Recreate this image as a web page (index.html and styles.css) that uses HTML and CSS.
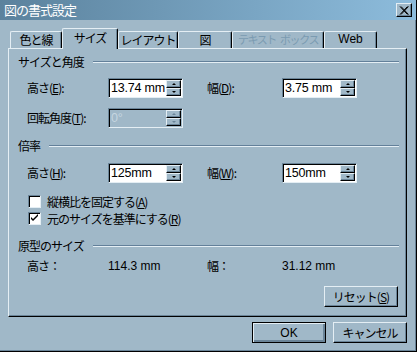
FILE: index.html
```html
<!DOCTYPE html>
<html lang="ja">

<head>
    <meta charset="UTF-8">
    <title>図の書式設定</title>
    <link rel="stylesheet" href="styles.css">
</head>

<body>
    <div class="dialog">
        <div class="titlebar">
            <span class="title">図の書式設定</span>
            <div class="close">
                <svg width="10" height="9" viewBox="0 0 10 9">
                    <path d="M1 0.5 L8.5 8.5 M2 0.5 L9.5 8.5 M8.5 0.5 L1 8.5 M9.5 0.5 L2 8.5" stroke="#000" stroke-width="1" fill="none"/>
                </svg>
            </div>
        </div>

        <div class="body">
            <ul class="tabs">
                <li class="tab w1">色と線</li>
                <li class="tab w2 active">サイズ</li>
                <li class="tab w3">レイアウト</li>
                <li class="tab w4">図</li>
                <li class="tab w5 disabled">テキスト ボックス</li>
                <li class="tab w6">Web</li>
            </ul>

            <div class="panel">
                <!-- サイズと角度 -->
                <div class="group-head g1">
                    <span>サイズと角度</span>
                    <i class="rule"></i>
                </div>
                <div class="row r1">
                    <label class="lbl">高さ(<u>E</u>):</label>
                    <div class="spin">
                        <span class="val">13.74 mm</span>
                        <span class="arrows"><b class="up"></b><b class="down"></b></span>
                    </div>
                    <label class="lbl lbl2">幅(<u>D</u>):</label>
                    <div class="spin">
                        <span class="val">3.75 mm</span>
                        <span class="arrows"><b class="up"></b><b class="down"></b></span>
                    </div>
                </div>
                <div class="row r2">
                    <label class="lbl">回転角度(<u>T</u>):</label>
                    <div class="spin off">
                        <span class="val">0°</span>
                        <span class="arrows"><b class="up"></b><b class="down"></b></span>
                    </div>
                </div>

                <!-- 倍率 -->
                <div class="group-head g2">
                    <span>倍率</span>
                    <i class="rule"></i>
                </div>
                <div class="row r3">
                    <label class="lbl">高さ(<u>H</u>):</label>
                    <div class="spin">
                        <span class="val">125mm</span>
                        <span class="arrows"><b class="up"></b><b class="down"></b></span>
                    </div>
                    <label class="lbl lbl2">幅(<u>W</u>):</label>
                    <div class="spin">
                        <span class="val">150mm</span>
                        <span class="arrows"><b class="up"></b><b class="down"></b></span>
                    </div>
                </div>
                <div class="check c1">
                    <span class="box"></span>
                    <span>縦横比を固定する(<u>A</u>)</span>
                </div>
                <div class="check">
                    <span class="box">
                        <svg width="9" height="9" viewBox="0 0 9 9">
                            <path d="M1 3 V5 L3 7 L8 2 V0 L3 5 Z" fill="#000"/>
                        </svg>
                    </span>
                    <span>元のサイズを基準にする(<u>R</u>)</span>
                </div>

                <!-- 原型のサイズ -->
                <div class="group-head g3">
                    <span>原型のサイズ</span>
                    <i class="rule"></i>
                </div>
                <div class="row info">
                    <span class="lbl">高さ：</span>
                    <span class="num">114.3 mm</span>
                    <span class="lbl lbl2">幅：</span>
                    <span class="num">31.12 mm</span>
                </div>

                <div class="reset-row">
                    <div class="btn reset">リセット(<u>S</u>)</div>
                </div>
            </div>

            <div class="footer">
                <div class="btn default">OK</div>
                <div class="btn">キャンセル</div>
            </div>
        </div>
    </div>
</body>

</html>
```

FILE: styles.css
```css
* {
    margin: 0;
    padding: 0;
    box-sizing: border-box;
}

body {
    background-color: #a0b8c8;
    font-family: "Noto Sans CJK JP", sans-serif;
    font-size: 12px;
    color: #000;
}

ul,
li {
    list-style: none;
}

u {
    text-decoration: underline;
    text-underline-offset: 1px;
}

.dialog {
    width: 417px;
    height: 352px;
    display: flex;
    flex-direction: column;
    background-color: #a0b8c8;
    border-right: 1px solid #000;
    border-bottom: 1px solid #000;
    box-shadow: inset -1px -1px 0 #6a8498;
}

/* タイトルバー */
.titlebar {
    height: 20px;
    display: flex;
    align-items: center;
    justify-content: space-between;
    padding: 0 4px 0 4px;
    background: linear-gradient(to right, #5b829d, #8dbcdc);
}

.title {
    color: #fff;
    font-size: 13px;
    line-height: 20px;
    letter-spacing: -1px;
}

.close {
    width: 16px;
    height: 14px;
    display: flex;
    align-items: center;
    justify-content: center;
    background-color: #a0b8c8;
    border-top: 1px solid #e4eef4;
    border-left: 1px solid #e4eef4;
    border-right: 1px solid #000;
    border-bottom: 1px solid #000;
    box-shadow: inset -1px -1px 0 #6a8498;
}

.body {
    flex: 1;
    padding: 8px 9px 0 8px;
}

/* タブ */
.tabs {
    height: 20px;
    display: flex;
    align-items: flex-end;
    padding-left: 2px;
}

.tab {
    height: 17px;
    line-height: 15px;
    text-align: center;
    white-space: nowrap;
    letter-spacing: -1px;
    background-color: #a0b8c8;
    border-top: 1px solid #e4eef4;
    border-left: 1px solid #e4eef4;
    border-right: 1px solid #000;
    border-radius: 2px 2px 0 0;
    box-shadow: inset -1px 0 0 #6a8498;
}

.tab.active {
    height: 21px;
    line-height: 17px;
    margin-bottom: -1px;
    position: relative;
    z-index: 1;
}

.tab.disabled {
    color: #7b9bb1;
}

.w1 { width: 52px; }
.w2 { width: 56px; }
.w3 { width: 60px; }
.w4 { width: 54px; }
.w5 { width: 92px; font-size: 11px; letter-spacing: -1.4px; word-spacing: 3px; }
.w6 { width: 53px; letter-spacing: 0; font-family: "Liberation Sans", sans-serif; }

/* パネル */
.panel {
    height: 269px;
    padding: 6px 7px 0 9px;
    border-top: 1px solid #e4eef4;
    border-left: 1px solid #e4eef4;
    border-right: 1px solid #000;
    border-bottom: 1px solid #000;
    box-shadow: inset -1px -1px 0 #6a8498;
}

.group-head {
    height: 14px;
    display: flex;
    align-items: center;
    gap: 9px;
    line-height: 14px;
    letter-spacing: -1px;
}

.rule {
    flex: 1;
    height: 2px;
    border-top: 1px solid #63809a;
    border-bottom: 1px solid #e4eef4;
}

.g2 { margin-top: 11px; }
.g3 { margin-top: 12px; }

.row {
    display: flex;
    align-items: center;
    padding-left: 9px;
}

.r1 { margin-top: 9px; }
.r2 { margin-top: 10px; }
.r3 { margin-top: 10px; }

.lbl {
    width: 81px;
    letter-spacing: -1px;
    line-height: 14px;
}

.lbl2 {
    width: 75px;
    margin-left: 24px;
}

/* スピンボックス */
.spin {
    width: 75px;
    height: 20px;
    display: flex;
    background-color: #fff;
    border-top: 1px solid #6a8498;
    border-left: 1px solid #6a8498;
    border-right: 1px solid #e4eef4;
    border-bottom: 1px solid #e4eef4;
    box-shadow: inset 1px 1px 0 #000;
}

.val {
    flex: 1;
    overflow: hidden;
    white-space: nowrap;
    padding: 1px 0 0 2px;
    font-family: "Liberation Sans", sans-serif;
    font-size: 12.5px;
    letter-spacing: -0.2px;
    line-height: 17px;
}

.arrows {
    width: 15px;
    flex: none;
    display: flex;
    flex-direction: column;
    margin: 1px 1px 1px 0;
}

.arrows b {
    flex: 1;
    display: flex;
    align-items: center;
    justify-content: center;
    background-color: #a0b8c8;
    border-top: 1px solid #e4eef4;
    border-left: 1px solid #e4eef4;
    border-right: 1px solid #000;
    border-bottom: 1px solid #000;
    box-shadow: inset -1px -1px 0 #6a8498;
}

.arrows b::after {
    content: "";
    width: 0;
    height: 0;
    border-left: 2px solid transparent;
    border-right: 2px solid transparent;
}

.arrows .up::after {
    border-bottom: 2px solid #000;
}

.arrows .down::after {
    border-top: 2px solid #000;
}

.spin.off {
    background-color: #a0b8c8;
}

.spin.off .val {
    color: #c6d6e0;
}

.spin.off .arrows .up::after {
    border-bottom-color: #6a8498;
}

.spin.off .arrows .down::after {
    border-top-color: #6a8498;
}

/* チェックボックス */
.check {
    height: 17px;
    display: flex;
    align-items: center;
    gap: 3px;
    padding-left: 10px;
    letter-spacing: -1px;
}

.c1 { margin-top: 10px; }

.box {
    width: 13px;
    height: 13px;
    display: flex;
    align-items: center;
    justify-content: center;
    background-color: #fff;
    border-top: 1px solid #6a8498;
    border-left: 1px solid #6a8498;
    border-right: 1px solid #e4eef4;
    border-bottom: 1px solid #e4eef4;
    box-shadow: inset 1px 1px 0 #000;
    margin-right: 3px;
}

.info {
    height: 14px;
    margin-top: 6px;
}

.num {
    width: 75px;
    font-family: "Liberation Sans", sans-serif;
    font-size: 12px;
}

/* ボタン */
.reset-row {
    display: flex;
    justify-content: flex-end;
    margin-top: 13px;
    padding-right: 1px;
}

.btn {
    width: 74px;
    height: 21px;
    display: flex;
    align-items: center;
    justify-content: center;
    letter-spacing: -1px;
    background-color: #a0b8c8;
    border-top: 1px solid #e4eef4;
    border-left: 1px solid #e4eef4;
    border-right: 1px solid #000;
    border-bottom: 1px solid #000;
    box-shadow: inset -1px -1px 0 #6a8498;
}

.btn.default {
    border: 1px solid #000;
    box-shadow: inset 1px 1px 0 #e4eef4, inset -2px -2px 0 #6a8498;
    font-family: "Liberation Sans", sans-serif;
    letter-spacing: 0;
}

.footer {
    display: flex;
    justify-content: flex-end;
    gap: 7px;
    margin-top: 5px;
}
```
